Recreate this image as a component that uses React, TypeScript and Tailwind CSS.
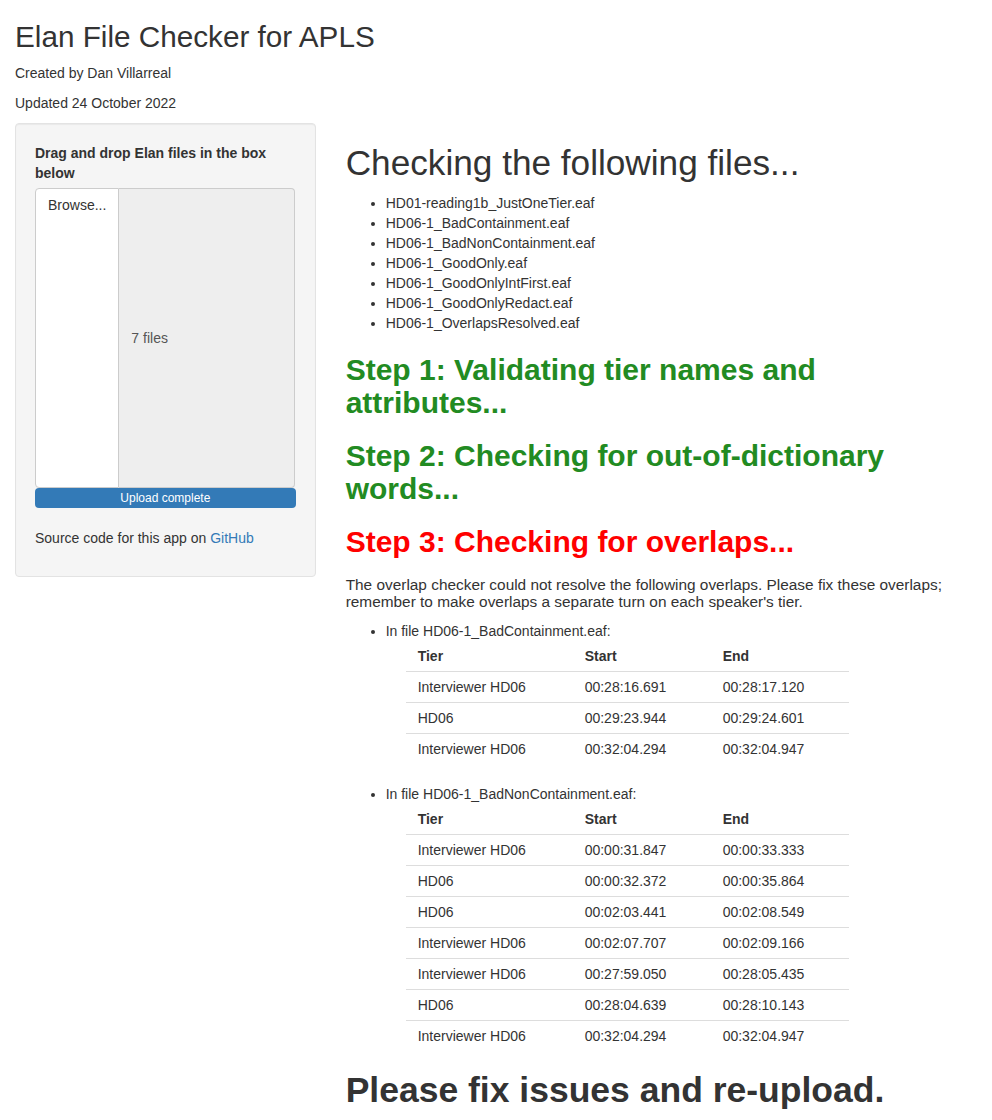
import React from "react";

const files = [
  "HD01-reading1b_JustOneTier.eaf",
  "HD06-1_BadContainment.eaf",
  "HD06-1_BadNonContainment.eaf",
  "HD06-1_GoodOnly.eaf",
  "HD06-1_GoodOnlyIntFirst.eaf",
  "HD06-1_GoodOnlyRedact.eaf",
  "HD06-1_OverlapsResolved.eaf",
];

const overlaps: { file: string; rows: [string, string, string][] }[] = [
  {
    file: "HD06-1_BadContainment.eaf",
    rows: [
      ["Interviewer HD06", "00:28:16.691", "00:28:17.120"],
      ["HD06", "00:29:23.944", "00:29:24.601"],
      ["Interviewer HD06", "00:32:04.294", "00:32:04.947"],
    ],
  },
  {
    file: "HD06-1_BadNonContainment.eaf",
    rows: [
      ["Interviewer HD06", "00:00:31.847", "00:00:33.333"],
      ["HD06", "00:00:32.372", "00:00:35.864"],
      ["HD06", "00:02:03.441", "00:02:08.549"],
      ["Interviewer HD06", "00:02:07.707", "00:02:09.166"],
      ["Interviewer HD06", "00:27:59.050", "00:28:05.435"],
      ["HD06", "00:28:04.639", "00:28:10.143"],
      ["Interviewer HD06", "00:32:04.294", "00:32:04.947"],
    ],
  },
];

function OverlapTable({ rows }: { rows: [string, string, string][] }) {
  return (
    <table className="ml-5 mb-5 border-collapse w-[443px] text-[14px] leading-5">
      <thead>
        <tr className="border-b border-[#dddddd]">
          <th className="w-[167px] text-left font-bold px-3 py-[5px]">Tier</th>
          <th className="w-[138px] text-left font-bold px-3 py-[5px]">Start</th>
          <th className="w-[138px] text-left font-bold px-3 py-[5px]">End</th>
        </tr>
      </thead>
      <tbody>
        {rows.map((r, i) => (
          <tr key={i} className="border-t border-[#dddddd]">
            <td className="px-3 py-[5px]">{r[0]}</td>
            <td className="px-3 py-[5px]">{r[1]}</td>
            <td className="px-3 py-[5px]">{r[2]}</td>
          </tr>
        ))}
      </tbody>
    </table>
  );
}

export default function App() {
  return (
    <div className="bg-white min-h-[1120px] px-[15px] text-[#333333] text-[14px] leading-5 font-['Liberation_Sans',Arial,sans-serif]">
      <h2 className="mt-5 mb-[10px] text-[29.7px] leading-[33px] font-normal">
        Elan File Checker for APLS
      </h2>
      <p className="mb-[10px]">Created by Dan Villarreal</p>
      <p className="mb-[10px]">Updated 24 October 2022</p>

      <div className="flex -mx-[15px]">
        <div className="w-1/3 px-[15px]">
          <div className="bg-[#f5f5f5] border border-[#e3e3e3] rounded p-[19px] shadow-[inset_0_1px_1px_rgba(0,0,0,0.05)]">
            <label className="inline-block font-bold mb-[5px]">
              Drag and drop Elan files in the box below
            </label>
            <div className="flex h-[300px]">
              <div className="bg-white border border-[#cccccc] rounded-l px-3 py-[6px] text-[#333333]">
                Browse...
              </div>
              <div className="flex-1 flex items-center bg-[#eeeeee] border border-l-0 border-[#cccccc] rounded-r px-3 text-[#555555] mr-[1px]">
                7 files
              </div>
            </div>
            <div className="h-5 bg-[#337ab7] rounded text-white text-[12px] leading-5 text-center">
              Upload complete
            </div>
            <p className="mt-5 mb-[9px]">
              Source code for this app on{" "}
              <a className="text-[#337ab7]" href="#">
                GitHub
              </a>
            </p>
          </div>
        </div>

        <div className="w-2/3 px-[15px]">
          <h1 className="mt-5 mb-[10px] text-[35.2px] leading-[39.6px] font-normal">
            Checking the following files...
          </h1>
          <ul className="list-disc pl-10">
            {files.map((f) => (
              <li key={f}>{f}</li>
            ))}
          </ul>
          <h2 className="mt-5 text-[30px] leading-[33px] font-bold text-[#228b22]">
            Step 1: Validating tier names and attributes...
          </h2>
          <h2 className="mt-5 text-[30px] leading-[33px] font-bold text-[#228b22]">
            Step 2: Checking for out-of-dictionary words...
          </h2>
          <h2 className="mt-5 text-[30px] leading-[33px] font-bold text-[#ff0000]">
            Step 3: Checking for overlaps...
          </h2>
          <p className="mt-[18px] text-[15.4px] leading-[17px]">
            The overlap checker could not resolve the following overlaps. Please fix these
            overlaps; remember to make overlaps a separate turn on each speaker's tier.
          </p>
          <ul className="list-disc pl-10 mt-[11px]">
            {overlaps.map((o) => (
              <li key={o.file}>
                In file {o.file}:
                <OverlapTable rows={o.rows} />
              </li>
            ))}
          </ul>
          <h1 className="mt-0 text-[35.5px] leading-[39.6px] font-bold">
            Please fix issues and re-upload.
          </h1>
        </div>
      </div>
    </div>
  );
}
